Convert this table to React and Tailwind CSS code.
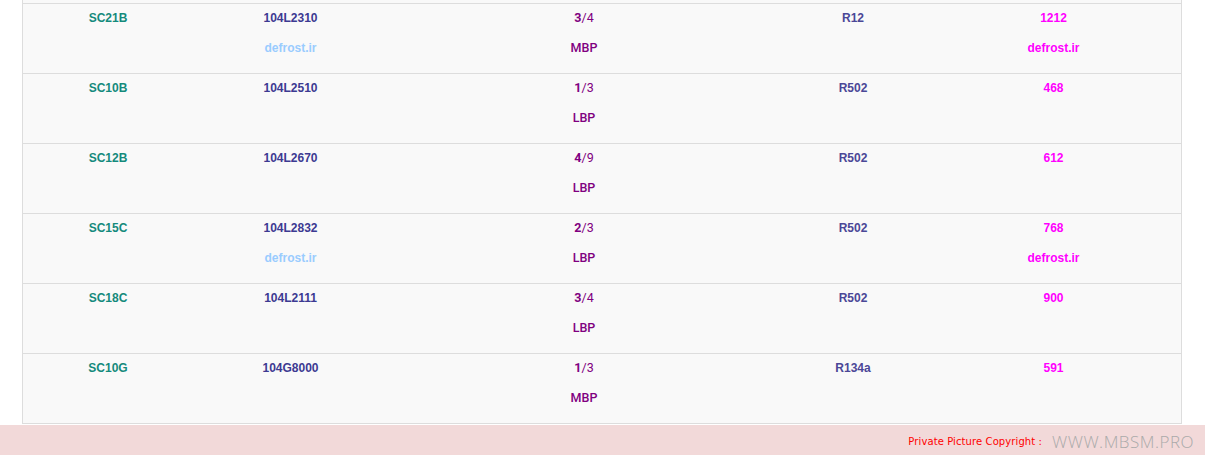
import React from 'react';

const rows = [
    { model: 'SC21B', code: '104L2310', hp: ['3', '/4'], type: 'MBP', gas: 'R12', watt: '1212', site: true },
    { model: 'SC10B', code: '104L2510', hp: ['1', '/3'], type: 'LBP', gas: 'R502', watt: '468', site: false },
    { model: 'SC12B', code: '104L2670', hp: ['4', '/9'], type: 'LBP', gas: 'R502', watt: '612', site: false },
    { model: 'SC15C', code: '104L2832', hp: ['2', '/3'], type: 'LBP', gas: 'R502', watt: '768', site: true },
    { model: 'SC18C', code: '104L2111', hp: ['3', '/4'], type: 'LBP', gas: 'R502', watt: '900', site: false },
    { model: 'SC10G', code: '104G8000', hp: ['1', '/3'], type: 'MBP', gas: 'R134a', watt: '591', site: false },
];

const cols = 'grid grid-cols-[170px_195px_392px_146px_255px]';

const App = () => {
    return (
        <div className="w-[1205px] h-[455px] bg-white overflow-hidden flex flex-col font-['Liberation_Sans',Arial,sans-serif] text-[12px] font-bold">
            <div className="ml-[22px] w-[1160px] border-x border-[#dddddd] bg-[#f9f9f9]">
                {/* tail of the previous row */}
                <div className="h-[4px] border-b border-[#dddddd]"></div>

                {rows.map((r, i) => (
                    <div key={i} className={`${cols} h-[70px] border-b border-[#dddddd] text-center leading-[20px] pt-[4px]`}>
                        <div className="text-[#148a7c]">{r.model}</div>
                        <div className="flex flex-col gap-[10px]">
                            <span className="text-[#3d3a92]">{r.code}</span>
                            {r.site && <span className="text-[#99ccff]">defrost.ir</span>}
                        </div>
                        <div className="flex flex-col gap-[10px] text-[#800080] font-['Roboto',sans-serif] text-[12.5px]">
                            <span>
                                <b className="font-bold">{r.hp[0]}</b>
                                <span className="font-normal">{r.hp[1]}</span>
                            </span>
                            <span className="font-medium">{r.type}</span>
                        </div>
                        <div className="text-[#4b4797]">{r.gas}</div>
                        <div className="flex flex-col gap-[10px] text-[#ff00ff]">
                            <span>{r.watt}</span>
                            {r.site && <span>defrost.ir</span>}
                        </div>
                    </div>
                ))}
            </div>

            {/* Copyright strip */}
            <div className="mt-[1px] h-[30px] bg-[#f2d9d9] flex items-center justify-end pr-[11px] pt-[3px] gap-[10px]">
                <span className="text-[#ff0000] text-[10px] font-normal tracking-[0.1px] font-['DejaVu_Sans',sans-serif]">
                    Private Picture Copyright :
                </span>
                <span className="text-[#aaaaaa] text-[17px] font-light font-['Open_Sans',sans-serif] tracking-[0.5px]">
                    WWW.MBSM.PRO
                </span>
            </div>
        </div>
    );
};

export default App;
